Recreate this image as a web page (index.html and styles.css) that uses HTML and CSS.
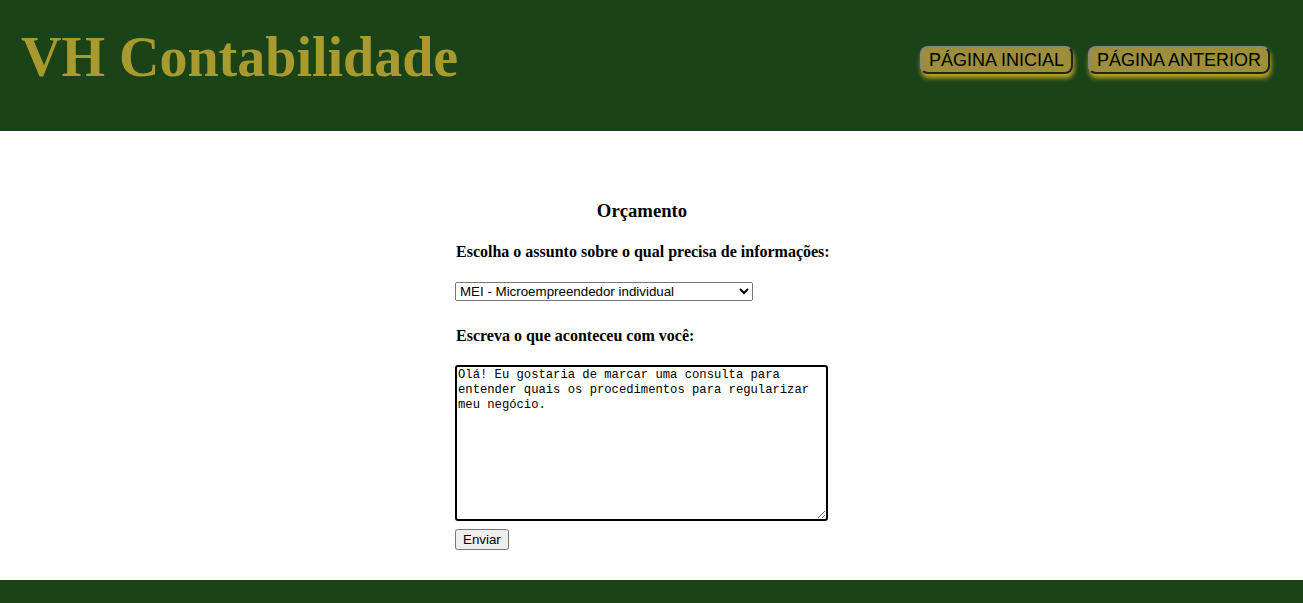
FILE: index.html
```html
<!DOCTYPE html>
<html lang="pt-BR">
<head>
<meta charset="utf-8">
<title>VH Contabilidade</title>
<link rel="stylesheet" href="styles.css">
</head>
<body>
<header class="topo">
  <h1 class="marca">VH Contabilidade</h1>
  <nav class="nav">
    <button class="nav-btn">PÁGINA INICIAL</button>
    <button class="nav-btn">PÁGINA ANTERIOR</button>
  </nav>
</header>
<main class="conteudo">
  <form class="form">
    <h3 class="titulo">Orçamento</h3>
    <label class="rotulo">Escolha o assunto sobre o qual precisa de informações:</label>
    <select class="sel">
      <option>MEI - Microempreendedor individual</option>
    </select>
    <label class="rotulo rotulo2">Escreva o que aconteceu com você:</label>
    <textarea class="texto">Olá! Eu gostaria de marcar uma consulta para entender quais os procedimentos para regularizar meu negócio.</textarea>
    <button type="button" class="enviar">Enviar</button>
  </form>
</main>
<footer class="rodape"></footer>
</body>
</html>
```
FILE: styles.css
```css
html, body {
  margin: 0;
  padding: 0;
}
body {
  font-family: "Liberation Serif", "Times New Roman", serif;
  background: #fff;
  color: #000;
}
.topo {
  background: #1a4318;
  height: 131px;
  display: flex;
  align-items: flex-start;
  justify-content: space-between;
  padding: 25px 33px 0 21px;
  box-sizing: border-box;
}
.marca {
  margin: 0;
  font-size: 56px;
  line-height: 64px;
  font-weight: bold;
  color: #a99a30;
  font-family: "Liberation Serif", "Times New Roman", serif;
}
.nav {
  display: flex;
  gap: 15px;
  padding-top: 21px;
}
.nav-btn {
  font-family: "Liberation Sans", Arial, sans-serif;
  font-size: 18px;
  color: #000;
  background: #9c8e3a;
  border: 2px solid;
  border-color: #888 #222 #222 #888;
  border-radius: 8px;
  padding: 0 7px;
  height: 28px;
  box-shadow: 1px 4px 5px #c9a72a;
}
.conteudo {
  padding: 68px 0 30px 455px;
}
.form {
  width: 374px;
  display: flex;
  flex-direction: column;
  align-items: flex-start;
}
.titulo {
  align-self: stretch;
  text-align: center;
  font-size: 18.7px;
  margin: 0 0 19px 0;
  line-height: 24px;
}
.rotulo {
  font-weight: bold;
  font-size: 16px;
  line-height: 19px;
  margin: 0 0 21px 1px;
  white-space: nowrap;
}
.rotulo2 {
  margin-top: 25px;
  margin-bottom: 20px;
}
.sel {
  width: 298px;
  height: 19px;
  font-family: "Liberation Sans", Arial, sans-serif;
  font-size: 13.33px;
  margin: 0;
}
.texto {
  width: 373px;
  height: 156px;
  box-sizing: border-box;
  border: 2px solid #000;
  border-radius: 3px;
  font-family: "Liberation Mono", "Courier New", monospace;
  font-size: 12.2px;
  line-height: 15px;
  padding: 1px 1px;
  margin: 0;
  resize: both;
  outline: none;
}
.enviar {
  margin-top: 8px;
  font-family: "Liberation Sans", Arial, sans-serif;
  font-size: 13.33px;
  height: 21px;
  padding: 1px 6px;
}
.rodape {
  background: #1a4318;
  height: 30px;
}
```
